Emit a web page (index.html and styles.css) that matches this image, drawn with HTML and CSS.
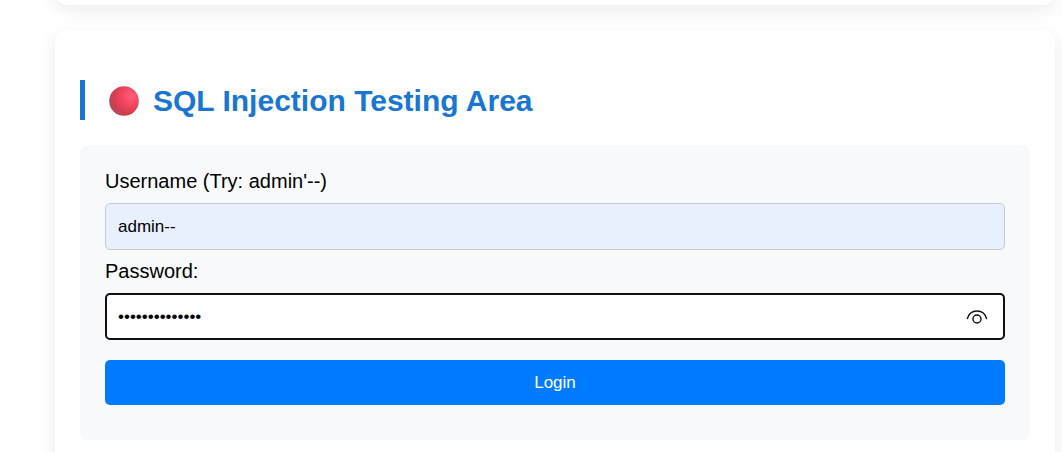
FILE: index.html
```html
<!DOCTYPE html>
<html lang="en">
<head>
<meta charset="utf-8">
<meta name="viewport" content="width=device-width, initial-scale=1">
<title>SQL Injection Testing Area</title>
<link rel="stylesheet" href="styles.css">
</head>
<body>
<main class="page">
  <section class="card card-previous"></section>
  <section class="card">
    <h2 class="card-title">
      <svg class="title-icon" viewBox="0 0 30 30" aria-hidden="true">
        <defs>
          <radialGradient id="ball" cx="0.74" cy="0.34" r="0.76">
            <stop offset="0" stop-color="#ff5f7c"/>
            <stop offset="0.35" stop-color="#f54a64"/>
            <stop offset="0.75" stop-color="#d93c50"/>
            <stop offset="1" stop-color="#b04a58"/>
          </radialGradient>
        </defs>
        <circle cx="15" cy="15" r="14.8" fill="url(#ball)"/>
      </svg>
      <span>SQL Injection Testing Area</span>
    </h2>
    <form class="login-form">
      <label class="field-label" for="username">Username (Try: admin'--)</label>
      <input class="field field-filled" id="username" type="text" value="admin--">
      <label class="field-label" for="password">Password:</label>
      <div class="password-box">
        <input class="field field-active" id="password" type="password" value="abcdefghijklmn">
        <button class="reveal" type="button" aria-label="Show password">
          <svg class="reveal-icon" viewBox="0 0 22 14" aria-hidden="true">
            <path d="M1.300 9C2.500 4.200 6.300 1 11 1S19.500 4.200 20.700 9"/>
            <circle cx="11" cy="9" r="4"/>
          </svg>
        </button>
      </div>
      <button class="submit" type="button">Login</button>
    </form>
  </section>
</main>
</body>
</html>
```
FILE: styles.css
```css
* {
  box-sizing: border-box;
}

body {
  height: 100vh;
  margin: 0;
  overflow: hidden;
  background: #fff;
  color: #000;
  font-family: "Liberation Sans", Arial, sans-serif;
  font-size: 20px;
}

.page {
  padding: 0 7px 0 55px;
}

.card {
  margin-bottom: 25px;
  padding: 50px 25px 25px;
  border-radius: 12px;
  background: #fff;
  box-shadow: 0 5px 18px rgba(0, 0, 0, 0.08);
}

.card-previous {
  height: 30px;
  margin-top: -25px;
  padding: 0;
}

.card-title {
  display: flex;
  align-items: center;
  gap: 14px;
  margin: 0 0 25px;
  padding: 2px 0 0 24px;
  border-left: 5px solid #1976d2;
  color: #1976d2;
  font-size: 30px;
  line-height: 38px;
}

.title-icon {
  flex: none;
  width: 30px;
  height: 30px;
}

.login-form {
  padding: 25px 25px 35px;
  border-radius: 8px;
  background: #f8f9fb;
}

.field-label {
  display: block;
  margin-bottom: 10px;
  line-height: 23px;
}

.field {
  display: block;
  width: 100%;
  height: 47px;
  padding: 0 12px;
  border: 1px solid #ccc;
  border-radius: 5px;
  background: #fff;
  color: #000;
  font-family: inherit;
  font-size: 17px;
}

.field-filled {
  margin-bottom: 10px;
  border-color: #c8cad0;
  background: #e8f0fe;
}

.field-active {
  padding: 0 46px 0 11px;
  border: 2px solid #101010;
}

.password-box {
  position: relative;
  margin-bottom: 20px;
}

.reveal {
  position: absolute;
  top: 8px;
  right: 12px;
  display: flex;
  align-items: center;
  justify-content: center;
  width: 32px;
  height: 31px;
  padding: 0;
  border: 0;
  background: none;
}

.reveal-icon {
  width: 22px;
  height: 14px;
  fill: none;
  stroke: #111;
  stroke-width: 1.4;
}

.submit {
  display: block;
  width: 100%;
  height: 45px;
  padding: 0;
  border: 0;
  border-radius: 5px;
  background: #007bff;
  color: #fff;
  font-family: inherit;
  font-size: 17px;
}
```
